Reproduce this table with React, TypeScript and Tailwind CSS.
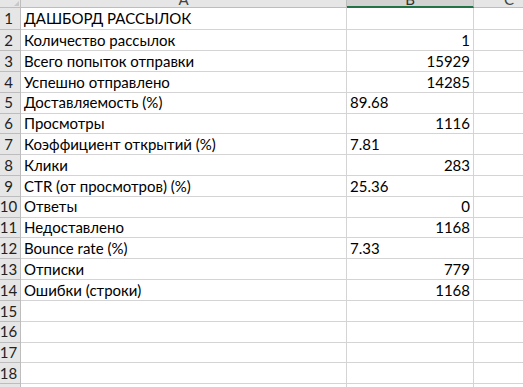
const rows: [string, string, "l" | "r" | ""][] = [
  ["ДАШБОРД РАССЫЛОК", "", ""],
  ["Количество рассылок", "1", "r"],
  ["Всего попыток отправки", "15929", "r"],
  ["Успешно отправлено", "14285", "r"],
  ["Доставляемость (%)", "89.68", "l"],
  ["Просмотры", "1116", "r"],
  ["Коэффициент открытий (%)", "7.81", "l"],
  ["Клики", "283", "r"],
  ["CTR (от просмотров) (%)", "25.36", "l"],
  ["Ответы", "0", "r"],
  ["Недоставлено", "1168", "r"],
  ["Bounce rate (%)", "7.33", "l"],
  ["Отписки", "779", "r"],
  ["Ошибки (строки)", "1168", "r"],
  ["", "", ""],
  ["", "", ""],
  ["", "", ""],
  ["", "", ""],
  ["", "", ""],
];

const App = () => {
  return (
    <div
      className="w-[523px] h-[387px] overflow-hidden bg-white text-black text-[15px]"
      style={{ fontFamily: "Lato, 'Open Sans', sans-serif" }}
    >
      <div className="grid grid-cols-[21px_326px_127px_100px]">
        {/* column headers */}
        <div className="h-[7.5px] bg-[#e6e6e6] border-r border-b border-[#bdbdbd] overflow-hidden relative">
          <div className="absolute right-[1px] bottom-[1px] w-0 h-0 border-l-[5px] border-l-transparent border-b-[5px] border-b-[#c8c8c8]" />
        </div>
        <div className="h-[7.5px] bg-[#e6e6e6] border-r border-b border-[#bdbdbd] overflow-hidden">
          <div className="-mt-[11px] leading-[20px] text-center text-[#444]">A</div>
        </div>
        <div className="h-[7.5px] bg-[#d2d2d2] border-r border-[#bdbdbd] border-b-2 border-b-[#217346] overflow-hidden">
          <div className="-mt-[11px] leading-[20px] text-center text-[#333]">B</div>
        </div>
        <div className="h-[7.5px] bg-[#e6e6e6] border-b border-[#bdbdbd] overflow-hidden">
          <div className="-mt-[11px] leading-[20px] pl-[30px] text-[#444]">C</div>
        </div>

        {rows.map(([label, value, align], i) => {
          const h = i === 0 ? "h-[22.7px]" : "h-[20.84px]";
          return (
            <div key={i} className="contents">
              <div
                className={`${h} bg-[#e6e6e6] border-r border-b border-[#bdbdbd] flex items-center justify-center pr-[3px] text-[#222]`}
              >
                {i + 1}
              </div>
              <div className={`${h} border-r border-b border-[#d4d4d4] flex items-center pl-[3px] whitespace-nowrap`}>
                {label}
              </div>
              <div
                className={`${h} border-r border-b border-[#d4d4d4] flex items-center px-[3px] ${
                  align === "r" ? "justify-end" : "justify-start"
                }`}
              >
                {value}
              </div>
              <div className={`${h} border-b border-[#d4d4d4]`} />
            </div>
          );
        })}
      </div>
    </div>
  );
};

export default App;
